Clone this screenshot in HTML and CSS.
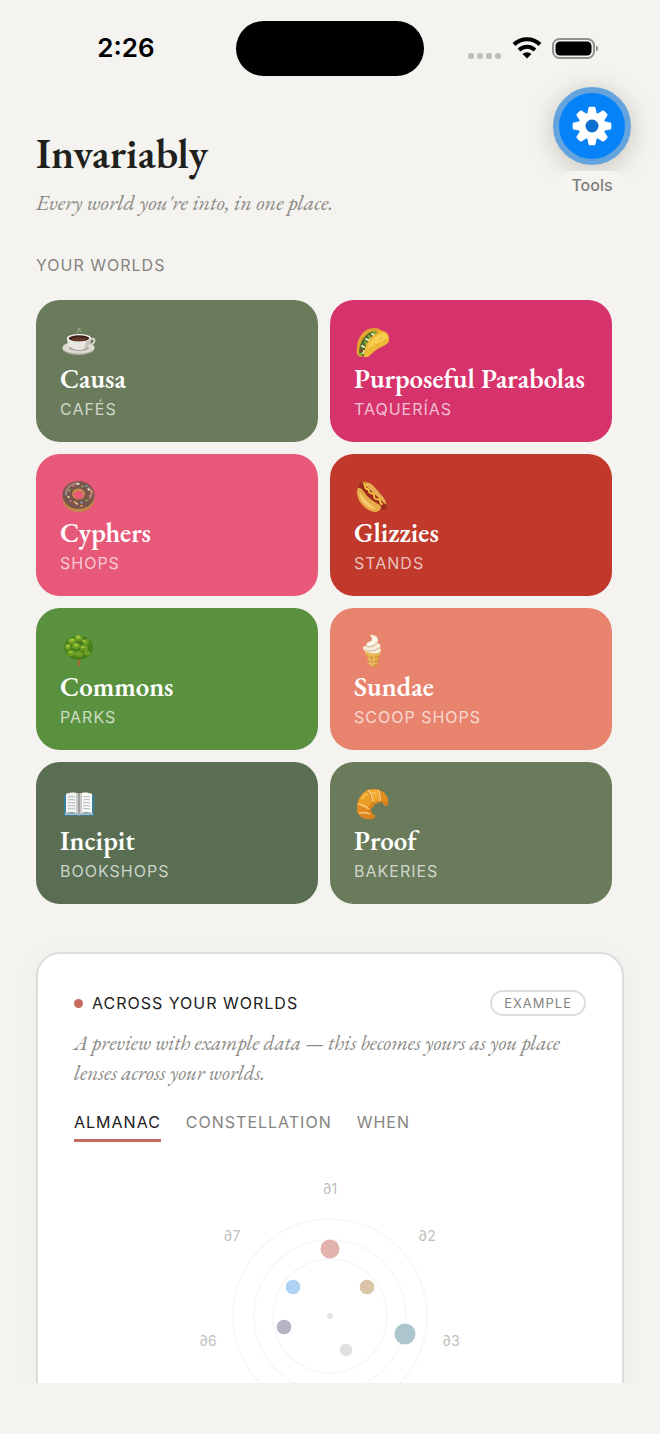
FILE: index.html
```html
<!DOCTYPE html>
<html lang="en">
<head>
    <meta charset="UTF-8">
    <meta name="viewport" content="width=device-width, initial-scale=1">
    <title>Invariably</title>
    <link rel="stylesheet" href="styles.css">
</head>
<body>

<div class="app">
    <div class="status">
        <span class="status-time">2:26</span>
        <span class="island"></span>
        <div class="status-icons">
            <svg width="34" height="24" viewBox="0 0 34 24" fill="#bdbcb9">
                <rect x="0" y="17" width="6" height="6" rx="2.500"/>
                <rect x="9" y="17" width="6" height="6" rx="2.500"/>
                <rect x="18" y="17" width="6" height="6" rx="2.500"/>
                <rect x="27" y="17" width="6" height="6" rx="2.500"/>
            </svg>
            <svg width="30" height="24" viewBox="0 0 30 24" fill="none" stroke="#000" stroke-width="4">
                <path d="M2 8.500a18.500 18.500 0 0 1 26 0"/>
                <path d="M7 14a11.500 11.500 0 0 1 16 0"/>
                <path d="M15 22.500l-4.500-4.500a6.500 6.500 0 0 1 9 0z" fill="#000" stroke="none"/>
            </svg>
            <svg width="47" height="24" viewBox="0 0 47 24">
                <rect x="1" y="3" width="41" height="19" rx="6.500" fill="none" stroke="#92918f" stroke-width="2"/>
                <rect x="3.500" y="5.500" width="36" height="14" rx="4.500"/>
                <path d="M44 9.500c3 1 3 5 0 6z" fill="#92918f"/>
            </svg>
        </div>
    </div>

    <div class="tools">
        <button class="tools-btn" id="tools" type="button" aria-labelledby="tools-label">
            <svg width="40" height="40" viewBox="-20 -20 40 40">
                <g fill="#fff">
                    <circle r="13.500"/>
                    <g id="teeth">
                        <path id="tooth" d="M-4.800-12L-3.500-18.300Q-3.200-19.300-2.200-19.300H2.200Q3.200-19.300 3.500-18.300L4.800-12z"/>
                        <use href="#tooth" transform="rotate(90)"/>
                        <use href="#tooth" transform="rotate(180)"/>
                        <use href="#tooth" transform="rotate(270)"/>
                    </g>
                    <use href="#teeth" transform="rotate(45)"/>
                </g>
                <circle r="6.500" fill="#0a6fd0"/>
            </svg>
        </button>
        <label class="tools-label" id="tools-label" for="tools">Tools</label>
    </div>

    <main class="scroll">
        <h1>Invariably</h1>
        <p class="tagline">Every world you're into, in one place.</p>

        <h2 class="section-label">YOUR WORLDS</h2>
        <div class="worlds">
            <a class="world causa" href="#">
                <svg class="emoji" viewBox="0 -2 36 36">
                    <ellipse cx="18.500" cy="22.500" rx="16" ry="6.500" fill="#b5b3a8"/>
                    <ellipse cx="18.500" cy="21.500" rx="16" ry="6" fill="#dddbd2"/>
                    <ellipse cx="19" cy="22" rx="10" ry="3" fill="#a6a49a"/>
                    <path d="M31 13c5-2 5 5-2 6" fill="none" stroke="#d5d3cb" stroke-width="2"/>
                    <path d="M7 12c0 7 4 12 12 12s12-5 12-12z" fill="#e9e7e1"/>
                    <path d="M23 23c5-1 8-5 8-11h-5c0 5-1 9-3 11z" fill="#c9c6bd"/>
                    <ellipse cx="19" cy="12" rx="12" ry="4" fill="#f2f1ec"/>
                    <ellipse cx="19" cy="12.300" rx="10.300" ry="3" fill="#3e211a"/>
                    <path d="M11 13c3-2 12-2 16 0-4 3-12 3-16 0z" fill="#65382a"/>
                    <path d="M18 7c-2-2 2-3 0-5M20 6c1-2-1-2 0-4" fill="none" stroke="#dbe3d1" stroke-opacity=".5"/>
                </svg>
                <span class="world-name">Causa</span>
                <span class="world-kind">CAFÉS</span>
            </a>
            <a class="world parabolas" href="#">
                <svg class="emoji" viewBox="0 -2 36 36">
                    <path d="M3 28C1 14 9 2 20 2c7 0 10 4 9 7L8 31c-3 0-4-1-5-3z" fill="#e3a52b"/>
                    <path d="M5 27C5 16 12 6 21 5l4 4L9 30c-2 0-4-1-4-3z" fill="#4c6930"/>
                    <g fill="none" stroke-width="2" stroke-linecap="round">
                        <path d="M8 20l2 1M12 13l2 1M18 8l2 1M9 27l1-2M15 15l1-2" stroke="#e1e9a9"/>
                        <path d="M7 24l1 1M14 17l-2 1M17 11l1 2" stroke="#97352a"/>
                        <path d="M6 28l2 0M11 16l1 2M15 10l1 1M20 6l1 1" stroke="#83b543"/>
                    </g>
                    <path d="M10 30C10 18 17 8 28 5c5 0 8 5 7 10-1 4-7 5-13 9-4 3-7 8-11 7-1 0-1 0-1-1z" fill="#eeb936"/>
                    <path d="M13 24c2-8 8-14 15-17 4 0 6 3 5 6-6 3-14 5-20 11z" fill="#f8ce50"/>
                    <g fill="#d3942b"><circle cx="20" cy="18" r=".7"/><circle cx="27" cy="12" r=".7"/><circle cx="24" cy="20" r=".6"/><circle cx="31" cy="14" r=".6"/></g>
                </svg>
                <span class="world-name">Purposeful Parabolas</span>
                <span class="world-kind">TAQUERÍAS</span>
            </a>
            <a class="world cyphers" href="#">
                <svg class="emoji" viewBox="0 -2 36 36">
                    <ellipse cx="18.500" cy="18" rx="16" ry="14" fill="#c18a49"/>
                    <ellipse cx="18.500" cy="15" rx="16" ry="14" fill="#7a554b"/>
                    <ellipse cx="18.500" cy="14" rx="6.500" ry="5.500" fill="#c88b4c"/>
                    <ellipse cx="18.500" cy="15" rx="4.800" ry="4" fill="#e75879"/>
                    <path d="M6 13C7 7 12 3 18 3M29 8c3 3 3 7 1 10" fill="none" stroke="#a88277" stroke-width="2" stroke-linecap="round"/>
                    <g fill="none" stroke-width="1.400" stroke-linecap="round">
                        <path d="M17 4h2M28 9l1 1M16 23l1 1M8 17l1 0" stroke="#fff2cf"/>
                        <path d="M10 10l-1 1M26 21l1-1M22 6l1 1" stroke="#75bc69"/>
                        <path d="M10 21l1 0M30 15l0 1M13 6l1 0" stroke="#e7748c"/>
                        <path d="M21 22l1 1M6 15l0-1M26 6l1 0" stroke="#70afd1"/>
                        <path d="M14 22l1 0M32 12l0-1M21 26l1 0" stroke="#edba4c"/>
                    </g>
                </svg>
                <span class="world-name">Cyphers</span>
                <span class="world-kind">SHOPS</span>
            </a>
            <a class="world glizzies" href="#">
                <svg class="emoji" viewBox="0 -2 36 36">
                    <path d="M7 3c3-3 8-1 12 3 5 5 9 9 13 16 2 5-2 8-7 7C16 28 8 15 5 8c0-2 0-4 2-5z" fill="#c47d2c"/>
                    <path d="M12 3c5-1 8 4 12 8 5 6 9 10 8 14l-5 2L10 8z" fill="#e7ad55"/>
                    <path d="M6 3c2-2 4 0 5 2l19 18c4 2 4 6 1 7-4 1-5-1-8-4L6 9C4 7 4 5 6 3z" fill="#9c2c1f"/>
                    <path d="M4 8c3-1 6 4 9 8 4 4 9 7 13 9 3 3-1 7-5 7C11 31 2 20 3 10z" fill="#e8aa46"/>
                    <path d="M5 12c4 4 9 12 18 17-9 1-17-8-18-17z" fill="#f6ca73"/>
                    <path d="M10 4c2 0 0 5 3 5s1 3 3 4 3-1 4 2-1 3 2 4 3-1 4 2 0 3 2 3" fill="none" stroke="#f9cc3e" stroke-width="1.800" stroke-linecap="round"/>
                </svg>
                <span class="world-name">Glizzies</span>
                <span class="world-kind">STANDS</span>
            </a>
            <a class="world commons" href="#">
                <svg class="emoji" viewBox="0 0 36 36">
                    <path d="M17 25h4l-1 9h-2z" fill="#a16e3b"/>
                    <ellipse cx="18.500" cy="15.500" rx="14.500" ry="12" fill="#477f1d"/>
                    <g fill="#6e9f24">
                        <ellipse cx="12" cy="9" rx="4" ry="3"/><ellipse cx="19" cy="6" rx="4" ry="3"/><ellipse cx="26" cy="10" rx="3" ry="3"/>
                        <ellipse cx="8" cy="15" rx="3" ry="3"/><ellipse cx="16" cy="14" rx="4" ry="3"/><ellipse cx="24" cy="16" rx="4" ry="3"/>
                        <ellipse cx="11" cy="21" rx="4" ry="3"/><ellipse cx="19" cy="22" rx="4" ry="3"/><ellipse cx="27" cy="21" rx="3" ry="2.500"/>
                    </g>
                    <g fill="#9cc439">
                        <ellipse cx="12" cy="8" rx="2.500" ry="1.500"/><ellipse cx="18" cy="5" rx="2.500" ry="1.500"/><ellipse cx="24" cy="9" rx="2" ry="1"/>
                        <ellipse cx="8" cy="14" rx="2" ry="1.500"/><ellipse cx="16" cy="13" rx="2.500" ry="1.500"/><ellipse cx="23" cy="15" rx="2" ry="1"/><ellipse cx="11" cy="20" rx="2" ry="1"/>
                    </g>
                </svg>
                <span class="world-name">Commons</span>
                <span class="world-kind">PARKS</span>
            </a>
            <a class="world sundae" href="#">
                <svg class="emoji" viewBox="0 -1 36 36">
                    <path d="M12 20h14l-3 13q-4 2-7 0z" fill="#d99a3c"/>
                    <path d="M10 16h17l-1 6q-7 3-14 0z" fill="#e9b657"/>
                    <path d="M15 23l2 10M20 23l-1 10M13 26q6 2 11 0M14 30q5 2 9 0" fill="none" stroke="#f4cd7b" stroke-width=".8"/>
                    <path d="M10 17c-2-2-1-4 2-4 0-3 2-4 5-5 2-1 1-3-1-6 6-1 10 4 7 8 3 0 5 4 2 5 3 1 2 4-1 5-5 1-11 0-14-3z" fill="#f7eedb"/>
                    <path d="M12 13c4 2 9 0 11-3M11 17c6 2 10 1 14-2" fill="none" stroke="#d2bfa1" stroke-width="1.200"/>
                    <path d="M18 5c3 1 2 4 0 5l-4 2" fill="none" stroke="#fff" stroke-width="1.500"/>
                </svg>
                <span class="world-name">Sundae</span>
                <span class="world-kind">SCOOP SHOPS</span>
            </a>
            <a class="world incipit" href="#">
                <svg class="emoji" viewBox="0 -4 36 36">
                    <path d="M4 5h30v21H21q-2 1-4 0H4z" fill="#387f9e"/>
                    <path d="M5 23h28v2H20q-1 1-2 0H5z" fill="#a9b4b9"/>
                    <path d="M6 4c4-2 10-2 13 0v20c-4-2-9-2-13-1z" fill="#f2f2f0"/>
                    <path d="M32 4c-4-2-10-2-13 0v20c4-2 9-2 13-1z" fill="#fafaf8"/>
                    <path d="M16 3q2 0 3 1v20q-1-1-3-1zM22 3q-2 0-3 1v20q1-1 3-1z" fill="#c8cbca"/>
                    <path d="M19 4v20" stroke="#717878"/>
                    <path d="M8 7q4-1 7 0M8 10q4-1 7 0M8 13q4-1 7 0M8 16q4-1 7 0M8 19q4-1 7 0M23 7q4-1 7 0M23 10q4-1 7 0M23 13q4-1 7 0M23 16q4-1 7 0M23 19q4-1 7 0" fill="none" stroke="#b3b7b8"/>
                </svg>
                <span class="world-name">Incipit</span>
                <span class="world-kind">BOOKSHOPS</span>
            </a>
            <a class="world proof" href="#">
                <svg class="emoji" viewBox="0 -3 36 36">
                    <path d="M4 24C1 16 4 6 14 1c7-2 14-1 18 5 3 5 3 11 0 11-3 0-3-4-5-4-2 1-4 1-6 2-1 3-4 4-4 7 1 3 5 4 4 6-1 4-15 3-17-4z" fill="#d98320"/>
                    <path d="M4 15C5 8 9 3 14 1l4 12c-1 2-3 3-4 6z" fill="#eb9d25"/>
                    <path d="M15 1c3-1 6-1 9 0l2 11c-2 0-4 0-6 2z" fill="#f1a62e"/>
                    <path d="M25 1c4 1 7 4 9 9-1 3-3 2-6 2z" fill="#e28d20"/>
                    <path d="M4 16l10 4c0 3-1 4 1 6-5 0-9-1-12-3z" fill="#e28c1f"/>
                    <path d="M14 1q4 4 5 12M24 1q3 5 2 11M4 15q6 1 11 5M5 24q6-1 11 1" fill="none" stroke="#f8d08a" stroke-width="1.300"/>
                    <path d="M8 10q2-4 5-5M18 4q3-1 4 1" fill="none" stroke="#fbc65c" stroke-width="1.500" stroke-linecap="round"/>
                </svg>
                <span class="world-name">Proof</span>
                <span class="world-kind">BAKERIES</span>
            </a>
        </div>

        <section class="panel">
            <div class="panel-head">
                <span class="dot"></span>
                <h2 class="panel-title">ACROSS YOUR WORLDS</h2>
                <span class="pill">EXAMPLE</span>
            </div>
            <p class="panel-text">A preview with example data — this becomes yours as you place lenses across your worlds.</p>
            <div class="tabs" role="tablist">
                <button class="tab on" type="button" role="tab" aria-selected="true">ALMANAC</button>
                <button class="tab" type="button" role="tab" aria-selected="false">CONSTELLATION</button>
                <button class="tab" type="button" role="tab" aria-selected="false">WHEN</button>
            </div>
            <svg class="radar" width="288" height="288" viewBox="-144 -144 288 288">
                <g fill="none" stroke="#f6f6f6" stroke-width="1.500">
                    <circle r="57"/>
                    <circle r="76"/>
                    <circle r="97"/>
                </g>
                <circle r="3" fill="#e3e3e3"/>
                <circle cx="0" cy="-67" r="9.500" fill="#e2b3ad"/>
                <circle cx="37" cy="-29" r="7.300" fill="#dac5a9"/>
                <circle cx="75" cy="18" r="10.500" fill="#adc5cd"/>
                <circle cx="16" cy="34" r="6.200" fill="#dfe0e2"/>
                <circle cx="-46" cy="11" r="7.300" fill="#b7b3c4"/>
                <circle cx="-37" cy="-29" r="7.300" fill="#aed3f4"/>
                <g class="radar-label">
                    <text x="0" y="-122">∂1</text>
                    <text x="97" y="-75">∂2</text>
                    <text x="121" y="30">∂3</text>
                    <text x="-122" y="30">∂6</text>
                    <text x="-98" y="-75">∂7</text>
                </g>
            </svg>
        </section>
    </main>
</div>

</body>
</html>
```
FILE: styles.css
```css
*{
    margin: 0;
    padding: 0;
    box-sizing: border-box;
}

body{
    background: #f4f3ef;
    color: #20211d;
    font-family: Inter, "Liberation Sans", sans-serif;
}

button{
    border: 0;
    background: none;
    font: inherit;
    cursor: pointer;
}

a{
    color: inherit;
    text-decoration: none;
}

.app{
    position: relative;
    display: flex;
    flex-direction: column;
    height: 100vh;
    padding-bottom: 51px;
}

/* status bar */
.status{
    display: grid;
    grid-template-columns: 1fr 188px 1fr;
    align-items: center;
    flex: none;
    height: 96px;
    color: #000;
}

.status-time{
    padding-left: 16px;
    font-size: 26px;
    font-weight: 600;
    line-height: 56px;
    text-align: center;
}

.island{
    height: 55px;
    border-radius: 28px;
    background: #000;
}

.status-icons{
    display: flex;
    gap: 10px;
    padding-left: 44px;
}

/* floating tools button */
.tools{
    position: absolute;
    top: 87px;
    right: 29px;
    z-index: 2;
    display: flex;
    flex-direction: column;
    align-items: center;
    gap: 6px;
}

.tools-btn{
    display: flex;
    align-items: center;
    justify-content: center;
    width: 78px;
    height: 78px;
    border: 6px solid #64a4de;
    border-radius: 50%;
    background: #0582f8;
    box-shadow: 0 4px 24px rgba(60,50,30,.25);
}

.tools-label{
    padding: 0 11px;
    border-radius: 12px;
    background: #f5f4f1;
    color: #7f7e7b;
    font-size: 16px;
    font-weight: 500;
    line-height: 28px;
}

/* content */
.scroll{
    flex: 1;
    min-height: 0;
    padding: 34px 36px 0;
    overflow: hidden;
}

h1{
    font-family: "EB Garamond", "Liberation Serif", serif;
    font-size: 42px;
    font-weight: 600;
    line-height: 48px;
}

.tagline,
.panel-text{
    color: #8b8a85;
    font-family: "EB Garamond", "Liberation Serif", serif;
    font-style: italic;
    line-height: 30px;
}

.tagline{
    margin-top: 10px;
    font-size: 22px;
}

.section-label,
.panel-title,
.tab,
.world-kind{
    font-size: 16px;
    font-weight: 400;
    letter-spacing: 1px;
    line-height: 22px;
}

.section-label{
    margin-top: 36px;
    color: #85847f;
}

.worlds{
    display: grid;
    grid-template-columns: 1fr 1fr;
    gap: 12px;
    margin: 24px 12px 48px 0;
}

.world{
    display: flex;
    flex-direction: column;
    padding: 24px 24px 22px;
    border-radius: 24px;
    color: #fff;
}

.emoji{
    width: 36px;
    height: 36px;
}

.world-name{
    font-family: "EB Garamond", "Liberation Serif", serif;
    font-size: 27px;
    font-weight: 600;
    line-height: 38px;
    white-space: nowrap;
}

.world-kind{
    color: rgba(255,255,255,.7);
}

.causa,
.proof{
    background: #697b5a;
}

.parabolas{
    background: #d6336c;
}

.cyphers{
    background: #e75879;
}

.glizzies{
    background: #c1392b;
}

.commons{
    background: #5a913f;
}

.sundae{
    background: #e8836d;
}

.incipit{
    background: #5a6e53;
}

/* preview panel */
.panel{
    padding: 36px;
    border: 2px solid #dcdcda;
    border-radius: 24px;
    background: #fff;
    box-shadow: 0 4px 24px rgba(0,0,0,.04);
}

.panel-head{
    display: flex;
    align-items: center;
    gap: 9px;
}

.dot{
    width: 9px;
    height: 9px;
    border-radius: 50%;
    background: #c76b5f;
}

.pill{
    margin-left: auto;
    padding: 0 12px;
    border: 2px solid #dededd;
    border-radius: 13px;
    color: #85847f;
    font-size: 13px;
    letter-spacing: 1px;
    line-height: 22px;
}

.panel-text{
    margin-top: 12px;
    font-size: 21px;
}

.tabs{
    display: flex;
    gap: 25px;
    margin-top: 23px;
}

.tab{
    padding-bottom: 6px;
    border-bottom: 3px solid transparent;
    color: #85847f;
}

.tab.on{
    border-color: #c76b5f;
    color: #20211d;
}

.radar{
    display: block;
    margin: 30px auto 0;
}

.radar-label{
    fill: #bfbfbd;
    font-size: 14px;
    text-anchor: middle;
}
```
